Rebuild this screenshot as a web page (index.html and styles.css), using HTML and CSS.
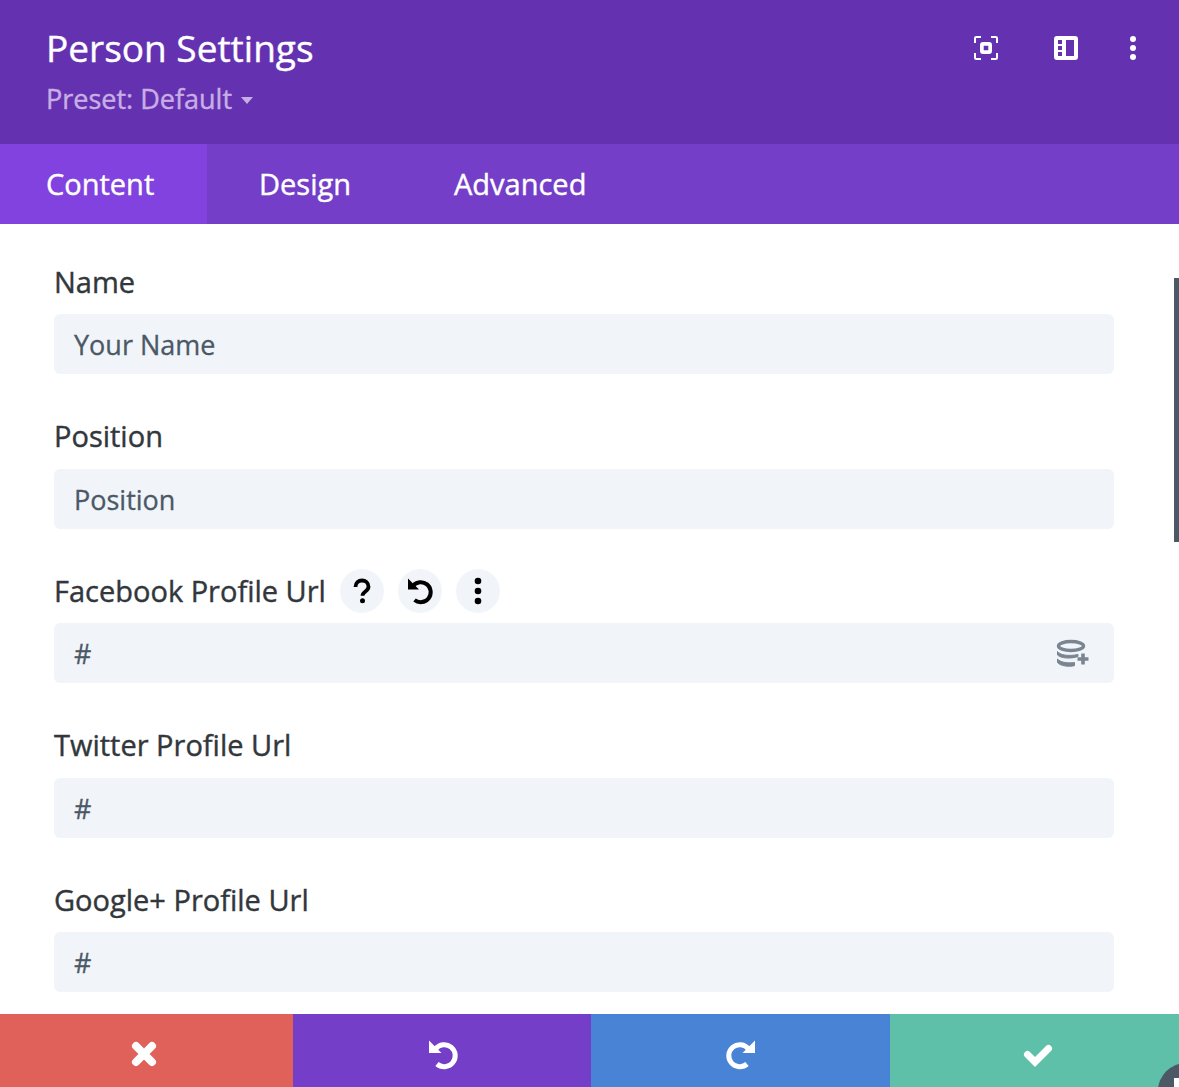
FILE: index.html
```html
<!DOCTYPE html>
<html lang="en">
<head>
<meta charset="utf-8">
<title>Person Settings</title>
<link rel="stylesheet" href="styles.css">
</head>
<body>
<div class="modal">
  <header class="head">
    <div class="head-text">
      <h1 class="title">Person Settings</h1>
      <div class="preset">Preset: Default <span class="caret"></span></div>
    </div>
    <div class="head-icons">
      <svg class="hi" width="24" height="24" viewBox="0 0 24 24" fill="none"><path d="M1 7V2.200C1 1.500 1.500 1 2.200 1H7M17 1h4.800c.7 0 1.200.5 1.200 1.200V7M23 17v4.800c0 .7-.5 1.200-1.200 1.200H17M7 23H2.200C1.500 23 1 22.500 1 21.800V17" stroke="#fff" stroke-width="2"/><path fill-rule="evenodd" clip-rule="evenodd" d="M9 6h6a3 3 0 0 1 3 3v6a3 3 0 0 1-3 3H9a3 3 0 0 1-3-3V9a3 3 0 0 1 3-3zm.7 3.700v4.600h4.600V9.700z" fill="#fff"/></svg>
      <svg class="hi hi-b" width="24" height="24" viewBox="0 0 24 24"><path fill-rule="evenodd" clip-rule="evenodd" d="M3 0h18a3 3 0 0 1 3 3v18a3 3 0 0 1-3 3H3a3 3 0 0 1-3-3V3a3 3 0 0 1 3-3zm1 4v4h4V4zm0 6v4h4v-4zm0 6v4h4v-4zm8-12v16h8V4z" fill="#fff"/></svg>
      <svg class="hi hi-c" width="6" height="24" viewBox="0 0 6 24"><circle cx="3" cy="3" r="3" fill="#fff"/><circle cx="3" cy="12" r="3" fill="#fff"/><circle cx="3" cy="21" r="3" fill="#fff"/></svg>
    </div>
  </header>
  <nav class="tabs">
    <div class="tab tab-on">Content</div>
    <div class="tab tab-design">Design</div>
    <div class="tab tab-adv">Advanced</div>
  </nav>
  <main class="form">
    <section class="field">
      <div class="label-row"><label class="label">Name</label></div>
      <div class="input">Your Name</div>
    </section>
    <section class="field">
      <div class="label-row"><label class="label">Position</label></div>
      <div class="input">Position</div>
    </section>
    <section class="field">
      <div class="label-row">
        <label class="label">Facebook Profile Url</label>
        <span class="round"><svg width="18" height="26" viewBox="0 0 18 26"><path d="M2.500 9C2.500 5 5.500 2.500 9 2.500S15.500 5 15.500 8.800c0 4.700-6 4.700-6 9" fill="none" stroke="#000" stroke-width="3.800"/><circle cx="9.500" cy="22.800" r="2.500" fill="#000"/></svg></span>
        <span class="round"><svg width="28" height="28" viewBox="0 0 28 28"><path d="M7 8.800A10 10 0 1 1 8.500 23" fill="none" stroke="#000" stroke-width="4"/><path d="M2 1.500v11h11z" fill="#000"/></svg></span>
        <span class="round"><svg width="8" height="30" viewBox="0 0 8 30"><circle cx="4" cy="5" r="3.300" fill="#000"/><circle cx="4" cy="15" r="3.300" fill="#000"/><circle cx="4" cy="25" r="3.300" fill="#000"/></svg></span>
      </div>
      <div class="input">#
        <svg class="db" width="34" height="30" viewBox="0 0 34 30" fill="none"><ellipse cx="15" cy="7" rx="12.500" ry="4.500" stroke="#7b8591" stroke-width="3.400"/><path d="M1.500 12.500C4 16 12 17.500 22 15.500v2c-7 2.500-17 2-20.500-1.500zM1.500 20c3 3.500 11 4.500 17 3.500v3.200C12 28 4.500 27 1.500 23.500z" fill="#7b8591" stroke="#7b8591"/><path d="M27 14.500v11M21.500 20h11" stroke="#7b8591" stroke-width="3.600"/></svg>
      </div>
    </section>
    <section class="field">
      <div class="label-row"><label class="label">Twitter Profile Url</label></div>
      <div class="input">#</div>
    </section>
    <section class="field">
      <div class="label-row"><label class="label">Google+ Profile Url</label></div>
      <div class="input">#</div>
    </section>
  </main>
  <div class="scrollbar"></div>
  <footer class="actions">
    <div class="act act-red"><svg width="26" height="26" viewBox="0 0 26 26"><path d="M5 5l16 16M21 5L5 21" stroke="#fff" stroke-width="8" stroke-linecap="round"/></svg></div>
    <div class="act act-purple"><svg width="32" height="32" viewBox="0 0 32 32"><path d="M8.500 11A11 11 0 1 1 10 26" fill="none" stroke="#fff" stroke-width="5"/><path d="M2 2.500v12.500h12.500z" fill="#fff"/></svg></div>
    <div class="act act-blue"><svg width="32" height="32" viewBox="0 0 32 32"><path d="M23.500 11A11 11 0 1 0 22 26" fill="none" stroke="#fff" stroke-width="5"/><path d="M30 2.500v12.500H17.500z" fill="#fff"/></svg></div>
    <div class="act act-green"><svg width="30" height="24" viewBox="0 0 30 24"><path d="M4.500 11.500l7.500 7.500L25.500 5.500" fill="none" stroke="#fff" stroke-width="7" stroke-linecap="round" stroke-linejoin="miter"/></svg></div>
  </footer>
  <div class="fab"><span class="fab-dot"></span></div>
</div>
</body>
</html>
```

FILE: styles.css
```css
* { box-sizing: border-box; }
html, body { margin: 0; padding: 0; }
body { font-family: "Open Sans", "Noto Sans", sans-serif; background: #fff; }
.modal { position: relative; width: 1179px; height: 1087px; overflow: hidden; display: flex; flex-direction: column; }

.head { height: 144px; flex: none; background: #6432b0; display: flex; justify-content: space-between; padding: 24px 43px 0 46px; }
.title { margin: 0; font-size: 37px; line-height: 48px; font-weight: 500; color: #fff; -webkit-text-stroke: 0.4px #fff; }
.preset { margin-top: 9px; line-height: 36px; font-weight: 500; color: #c8aee6; display: flex; align-items: center; gap: 9px; font-size: 27px; -webkit-text-stroke: 0.4px #c8aee6; }
.caret { width: 0; height: 0; border-left: 6px solid transparent; border-right: 6px solid transparent; border-top: 7px solid #c8aee6; margin-top: 2px; }
.head-icons { display: flex; align-items: flex-start; padding-top: 11px; }
.hi { margin-top: 1px; }
.hi-b { margin-left: 56px; }
.hi-c { margin-left: 52px; }

.tabs { height: 80px; flex: none; background: #743ec8; display: flex; }
.tab { font-size: 29px; font-weight: 500; color: #fff; line-height: 78px; padding-top: 1px; -webkit-text-stroke: 0.4px #fff; }
.tab-on { width: 207px; padding-left: 46px; background: #8142e0; }
.tab-design { padding-left: 52px; }
.tab-adv { padding-left: 103px; }

.form { flex: 1; padding: 36px 65px 0 54px; display: flex; flex-direction: column; gap: 40.5px; overflow: hidden; }
.field { flex: none; }
.label-row { height: 44px; margin-bottom: 10px; display: flex; align-items: center; gap: 14px; }
.label { font-size: 29px; line-height: 36px; font-weight: 500; color: #32373c; -webkit-text-stroke: 0.4px #32373c; padding-bottom: 1px; }
.round { width: 44px; height: 44px; border-radius: 50%; background: #f1f5f9; display: flex; align-items: center; justify-content: center; }
.input { position: relative; height: 60px; border-radius: 6px; background: #f1f5f9; padding: 1px 0 0 20px; font-size: 27px; line-height: 59px; font-weight: 500; color: #4c5866; -webkit-text-stroke: 0.3px #4c5866; }
.db { position: absolute; right: 24px; top: 16px; }

.scrollbar { position: absolute; left: 1174px; top: 278px; width: 5px; height: 264px; background: #4c5866; }

.actions { height: 73px; flex: none; display: grid; grid-template-columns: 293px 298px 299px 289px; }
.act { display: flex; align-items: center; justify-content: center; padding-top: 6px; }
.act-red { background: #e0605a; padding-right: 6px; }
.act-purple { background: #743ec8; padding-left: 2px; }
.act-blue { background: #4883d6; }
.act-green { background: #5ec0a8; padding-left: 6px; padding-top: 8px; }

.fab { position: absolute; left: 1158px; top: 1063px; width: 56px; height: 56px; border-radius: 50%; background: #4c5866; }
.fab-dot { position: absolute; left: 16px; top: 15px; width: 8px; height: 12px; background: #fff; }
```
